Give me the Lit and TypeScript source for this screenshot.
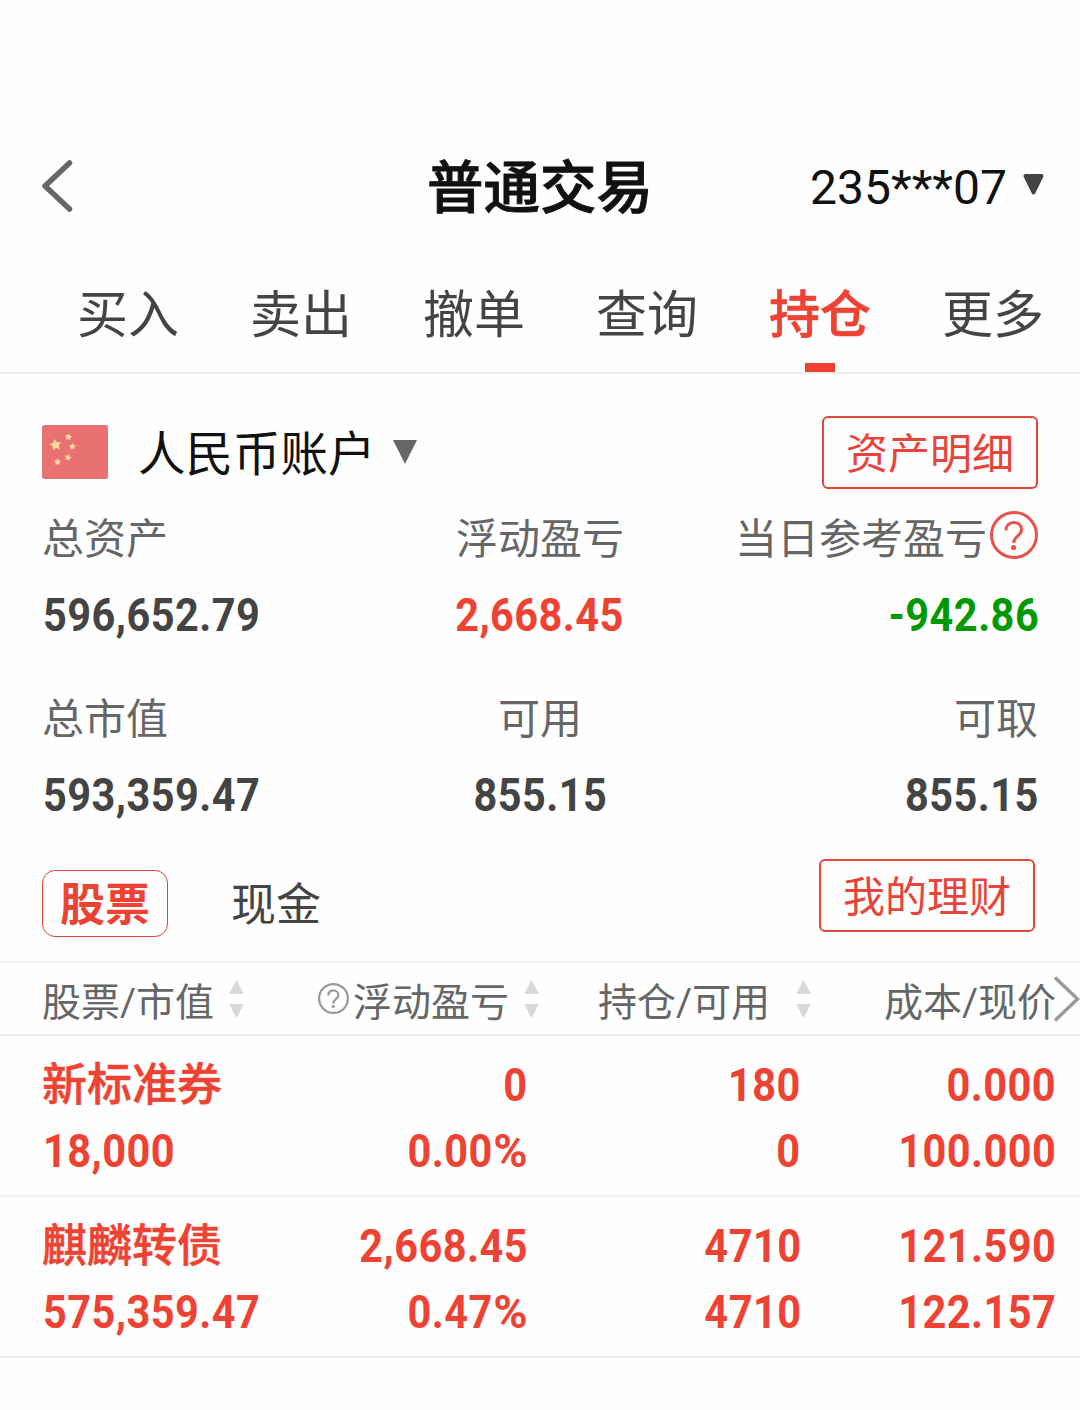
import { LitElement, html, css, svg } from "lit";
import { customElement, property, state } from "lit/decorators.js";
import { classMap } from "lit/directives/class-map.js";

interface Holding {
  name: string;
  value: string;
  profit: string;
  rate: string;
  held: string;
  usable: string;
  cost: string;
  price: string;
}

const TABS = ["买入", "卖出", "撤单", "查询", "持仓", "更多"];

const HOLDINGS: Holding[] = [
  { name: "新标准券", value: "18,000", profit: "0", rate: "0.00", held: "180", usable: "0", cost: "0.000", price: "100.000" },
  { name: "麒麟转债", value: "575,359.47", profit: "2,668.45", rate: "0.47", held: "4710", usable: "4710", cost: "121.590", price: "122.157" },
];

const starPoints = (cx: number, cy: number, r: number, turn: number) =>
  Array.from({ length: 10 }, (_, i) => {
    const radius = i % 2 ? r * 0.5 : r;
    const a = ((i * 36 + turn - 90) * Math.PI) / 180;
    return `${(cx + radius * Math.cos(a)).toFixed(2)},${(cy + radius * Math.sin(a)).toFixed(2)}`;
  }).join(" ");

/** Bold condensed figure, narrowed towards the side it is aligned to. */
@customElement("num-text")
export class NumText extends LitElement {
  @property() align: "left" | "center" | "right" = "left";
  static styles = css`
    :host { display: block; white-space: nowrap; }
    .n {
      display: inline-block;
      font: 700 45.5px/66px Roboto, sans-serif;
      letter-spacing: 0.5px;
      transform: scaleX(0.912);
    }
    .left { transform-origin: left center; margin-left: 1px; }
    .center { transform-origin: center; }
    .right { transform-origin: right center; margin-right: -1px; }
  `;
  render() {
    return html`<span class="n ${this.align}"><slot></slot></span>`;
  }
}

@customElement("sort-arrows")
export class SortArrows extends LitElement {
  static styles = css`
    :host { display: block; width: 15px; height: 38px; }
    svg { display: block; }
  `;
  render() {
    return html`<svg width="15" height="38" viewBox="0 0 15 38" fill="#d8d8d8">
      <path d="M7.5 0 15 14H0z" /><path d="M0 24h15L7.5 38z" />
    </svg>`;
  }
}

@customElement("help-icon")
export class HelpIcon extends LitElement {
  @property({ type: Number }) size = 48;
  @property({ type: Number }) weight = 3;
  static styles = css`
    :host { display: block; }
    svg { display: block; }
  `;
  render() {
    return html`<svg width=${this.size} height=${this.size} viewBox="0 0 48 48" fill="none" stroke="currentColor" stroke-width=${this.weight}>
      <circle cx="24" cy="24" r=${24 - this.weight / 2} />
      <path d="M16 19.5c0-5 3.2-8 7.8-8s7.7 2.900 7.700 7c0 3-1.600 4.700-3.900 6.600-2.600 2.200-4 3.500-4 6.900" />
      <circle cx="23.6" cy="36.5" r="2.600" fill="currentColor" stroke="none" />
    </svg>`;
  }
}

@customElement("app-root")
export class AppRoot extends LitElement {
  @state() private tab = 4;

  static styles = css`
    :host {
      display: block;
      width: 1080px;
      height: 1410px;
      overflow: hidden;
      background: #fefefe;
      color: #444;
      font-family: Roboto, "Noto Sans CJK SC", sans-serif;
      white-space: nowrap;
    }
    svg { display: block; }
    .header {
      display: grid;
      grid-template-columns: 1fr auto 1fr;
      align-items: center;
      height: 120px;
      padding: 128px 36px 0 36px;
      color: #111;
    }
    .title { font-size: 56.5px; line-height: 80px; font-weight: 500; -webkit-text-stroke: 0.9px #111; padding-top: 2px; }
    .back { margin: -4px 0 0 5px; }
    .user { display: flex; justify-content: flex-end; align-items: center; gap: 16px; font-size: 48px; margin-top: -2px; }
    .user svg { margin-top: -4px; }
    .tabs {
      display: flex;
      justify-content: space-between;
      height: 124px;
      padding: 0 36px 0 77px;
      border-bottom: 2px solid #eee;
    }
    .tab {
      display: flex;
      flex-direction: column;
      align-items: center;
      justify-content: space-between;
      width: 102px;
      font-size: 51px;
      line-height: 72px;
      padding-top: 32px;
      box-sizing: border-box;
    }
    .tab.on { color: #ee4233; font-weight: 500; -webkit-text-stroke: 0.6px #ee4233; }
    .bar { width: 30px; height: 9px; background: #ee4233; }
    .account { display: flex; align-items: center; height: 73px; padding: 42px 42px 0; }
    .flag { margin-top: -2px; }
    .account-name { margin-left: 30px; font-size: 47.5px; line-height: 70px; color: #111; padding-top: 5px; }
    .account .drop { margin: -1px 0 0 17px; }
    .outline {
      margin-left: auto;
      box-sizing: border-box;
      width: 216px;
      height: 73px;
      border: 2px solid #e0473b;
      border-radius: 6px;
      color: #e8443a;
      font-size: 42px;
      line-height: 74px;
      text-align: center;
    }
    .summary {
      display: grid;
      grid-template-columns: 1fr 1fr 1fr;
      grid-template-rows: 180px 180px;
      padding: 0 42px;
    }
    .cell { display: flex; flex-direction: column; align-items: flex-start; }
    .cell.mid { align-items: center; }
    .cell.end { align-items: flex-end; }
    .label { display: flex; align-items: center; height: 96px; font-size: 42px; color: #666; }
    .label span { margin-top: -4px; }
    .help { color: #e8524a; margin: -4px 0 0 3px; }
    .cell num-text { margin-top: -2px; }
    .red { color: #ee4233; }
    .green { color: #090; }
    .assets { display: flex; height: 112px; padding: 0 45px 0 42px; border-bottom: 2px solid #eee; }
    .pill {
      box-sizing: border-box;
      width: 126px;
      height: 67px;
      margin-top: 21px;
      border: 1.5px solid #e0473b;
      border-radius: 13px;
      color: #ee4233;
      font-size: 45px;
      line-height: 69px;
      font-weight: 700;
      text-align: center;
    }
    .cash { margin: 23px 0 0 63px; font-size: 45px; line-height: 68px; }
    .assets .outline { margin-top: 10px; }
    .columns {
      display: grid;
      grid-template-columns: 276px 280px 286px 1fr;
      align-items: center;
      height: 71px;
      padding-left: 42px;
      border-bottom: 2px solid #eee;
      font-size: 39px;
      color: #666;
    }
    .col { display: flex; align-items: center; }
    .col sort-arrows { margin-left: 15px; }
    .col.held sort-arrows { margin-left: 26px; }
    .info { color: #999; margin: -1px 4px 0 0; }
    .more { margin: 0 0 0 -3px; }
    .row {
      display: grid;
      grid-template-columns: 285px 200px 273px 255px;
      grid-template-rows: 66px 66px;
      height: 142px;
      padding: 17px 0 0 42px;
      border-bottom: 2px solid #eee;
      color: #ee4233;
    }
    .row .r { text-align: right; }
    .pct { display: inline-block; margin-left: 4px; transform: scaleX(1.12); transform-origin: right center; }
    .name { font-size: 45px; line-height: 66px; font-weight: 500; -webkit-text-stroke: 0.5px #ee4233; }
  `;

  private cell(label: unknown, value: string, align: "left" | "center" | "right", tone = "") {
    return html`<div class=${classMap({ cell: true, mid: align === "center", end: align === "right" })}>
      <div class="label">${label}</div>
      <num-text class=${tone} align=${align}>${value}</num-text>
    </div>`;
  }

  private figure(content: unknown) {
    return html`<num-text class="r" align="right">${content}</num-text>`;
  }

  render() {
    return html`
      <header class="header">
        <svg class="back" width="32" height="52" viewBox="0 0 32 52" fill="none" stroke="#666" stroke-width="5.5" stroke-linecap="round" stroke-linejoin="round">
          <path d="M28.5 3 4 26l24.5 23" />
        </svg>
        <div class="title">普通交易</div>
        <div class="user">
          <span>235***07</span>
          <svg width="21" height="22" viewBox="0 0 21 22"><path d="M2.5 2h16L10.500 18.500z" fill="#444" stroke="#444" stroke-width="4" stroke-linejoin="round" /></svg>
        </div>
      </header>

      <nav class="tabs">
        ${TABS.map(
          (t, i) => html`<div class=${classMap({ tab: true, on: i === this.tab })} @click=${() => (this.tab = i)}>
            <span>${t}</span>${i === this.tab ? html`<div class="bar"></div>` : null}
          </div>`
        )}
      </nav>

      <section class="account">
        <svg class="flag" width="66" height="54" viewBox="0 0 66 54">
          <rect width="66" height="54" rx="2.5" fill="#e87272" />
          ${[
            [13.5, 20, 6.2, -10],
            [26.5, 12, 3.8, 10],
            [30.5, 21.5, 3.8, 0],
            [26, 32.5, 3.8, 20],
            [15.5, 37, 3.8, 0],
          ].map(([x, y, r, t]) => svg`<polygon points=${starPoints(x, y, r, t)} fill="#fdd9a0" />`)}
        </svg>
        <span class="account-name">人民币账户</span>
        <svg class="drop" width="24" height="24" viewBox="0 0 24 24"><path d="M0 0h24L12 24z" fill="#666" /></svg>
        <div class="outline">资产明细</div>
      </section>

      <section class="summary">
        ${this.cell(html`<span>总资产</span>`, "596,652.79", "left")}
        ${this.cell(html`<span>浮动盈亏</span>`, "2,668.45", "center", "red")}
        ${this.cell(html`<span>当日参考盈亏</span><help-icon class="help"></help-icon>`, "-942.86", "right", "green")}
        ${this.cell(html`<span>总市值</span>`, "593,359.47", "left")}
        ${this.cell(html`<span>可用</span>`, "855.15", "center")}
        ${this.cell(html`<span>可取</span>`, "855.15", "right")}
      </section>

      <section class="assets">
        <div class="pill">股票</div>
        <div class="cash">现金</div>
        <div class="outline">我的理财</div>
      </section>

      <div class="columns">
        <div class="col"><span>股票/市值</span><sort-arrows></sort-arrows></div>
        <div class="col"><help-icon class="info" size="31" weight="3.4"></help-icon><span>浮动盈亏</span><sort-arrows></sort-arrows></div>
        <div class="col held"><span>持仓/可用</span><sort-arrows></sort-arrows></div>
        <div class="col">
          <span>成本/现价</span>
          <svg class="more" width="27" height="46" viewBox="0 0 27 46" fill="none" stroke="#999" stroke-width="3.4"><path d="M2 1.500 24.500 23 2 44.500" /></svg>
        </div>
      </div>

      ${HOLDINGS.map(
        (h) => html`<div class="row">
          <div class="name">${h.name}</div>
          ${this.figure(h.profit)}${this.figure(h.held)}${this.figure(h.cost)}
          <num-text>${h.value}</num-text>
          ${this.figure(html`${h.rate}<span class="pct">%</span>`)}${this.figure(h.usable)}${this.figure(h.price)}
        </div>`
      )}
    `;
  }
}
